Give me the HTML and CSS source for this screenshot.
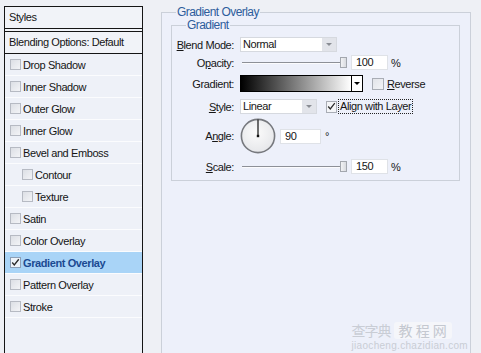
FILE: index.html
```html
<!DOCTYPE html>
<html lang="en">
<head>
<meta charset="utf-8">
<title>Layer Style - Gradient Overlay</title>
<link rel="stylesheet" href="styles.css">
</head>
<body>
<div class="dialog">
  <aside class="styles-panel">
    <div class="panel-head">Styles</div>
    <div class="panel-blend">Blending Options: Default</div>
    <ul class="fx-list">
      <li class="fx"><span class="cb"></span>Drop Shadow</li>
      <li class="fx"><span class="cb"></span>Inner Shadow</li>
      <li class="fx"><span class="cb"></span>Outer Glow</li>
      <li class="fx"><span class="cb"></span>Inner Glow</li>
      <li class="fx"><span class="cb"></span>Bevel and Emboss</li>
      <li class="fx sub"><span class="cb"></span>Contour</li>
      <li class="fx sub"><span class="cb"></span>Texture</li>
      <li class="fx"><span class="cb"></span>Satin</li>
      <li class="fx"><span class="cb"></span>Color Overlay</li>
      <li class="fx selected"><span class="cb checked"><svg viewBox="0 0 11 11" width="9" height="9"><path d="M1.5 5.5 L4 8.5 L9.5 1.5" fill="none" stroke="#2a2a2a" stroke-width="1.6"/></svg></span>Gradient Overlay</li>
      <li class="fx"><span class="cb"></span>Pattern Overlay</li>
      <li class="fx"><span class="cb"></span>Stroke</li>
    </ul>
  </aside>

  <main class="settings">
    <fieldset class="group outer">
      <legend>Gradient Overlay</legend>
      <fieldset class="group inner">
        <legend>Gradient</legend>

        <div class="row r-blend">
          <span class="lbl"><u>B</u>lend Mode:</span>
          <div class="select w-blend"><span class="sel-text">Normal</span><span class="sel-arrow"><i></i></span></div>
        </div>

        <div class="row r-opacity">
          <span class="lbl">O<u>p</u>acity:</span>
          <div class="slider"><span class="track"></span><span class="thumb"></span></div>
          <span class="num">100</span>
          <span class="unit">%</span>
        </div>

        <div class="row r-grad">
          <span class="lbl">Gradient:</span>
          <div class="gradient"><span class="ramp"></span><span class="ramp-arrow"><i></i></span></div>
          <span class="cb box12"></span>
          <span class="opt"><u>R</u>everse</span>
        </div>

        <div class="row r-style">
          <span class="lbl"><u>S</u>tyle:</span>
          <div class="select w-style"><span class="sel-text">Linear</span><span class="sel-arrow"><i></i></span></div>
          <span class="cb box12 checked"><svg viewBox="0 0 11 11" width="9" height="9"><path d="M1.5 5.5 L4 8.5 L9.5 1.5" fill="none" stroke="#2a2a2a" stroke-width="1.5"/></svg></span>
          <span class="focus">Align with Layer</span>
        </div>

        <div class="row r-angle">
          <span class="lbl">A<u>n</u>gle:</span>
          <svg class="dial" viewBox="0 0 36 36" width="36" height="36">
            <defs>
              <radialGradient id="dialfill" cx="0.45" cy="0.4" r="0.6">
                <stop offset="0" stop-color="#fbfbfb"/>
                <stop offset="1" stop-color="#e6e7ea"/>
              </radialGradient>
            </defs>
            <circle cx="18" cy="18" r="16.6" fill="url(#dialfill)" stroke="#77797e" stroke-width="1.6"/>
            <line x1="18" y1="18" x2="18" y2="1.5" stroke="#111" stroke-width="1.2"/>
            <rect x="16.8" y="16.8" width="2.4" height="2.4" fill="#111"/>
          </svg>
          <span class="num w-angle">90</span>
          <span class="unit deg">°</span>
        </div>

        <div class="row r-scale">
          <span class="lbl"><u>S</u>cale:</span>
          <div class="slider"><span class="track"></span><span class="thumb"></span></div>
          <span class="num">150</span>
          <span class="unit">%</span>
        </div>
      </fieldset>
    </fieldset>
  </main>

  <div class="watermark">
    <div class="wm-top"><span class="wm-a">查字典</span><span class="wm-b">教 程 网</span></div>
    <div class="wm-url">jiaocheng.chazidian.com</div>
  </div>
</div>
</body>
</html>
```

FILE: styles.css
```css
* { box-sizing: border-box; }

html, body {
  margin: 0;
  padding: 0;
}

body {
  width: 481px;
  height: 353px;
  overflow: hidden;
  background: #eef0f5;
  font-family: "Liberation Sans", Arial, sans-serif;
  font-size: 11px;
  letter-spacing: -0.4px;
  color: #151515;
}

u { text-decoration: underline; text-underline-offset: 1px; }

.dialog {
  position: relative;
  display: flex;
  height: 353px;
  overflow: hidden;
}

/* ---------- left styles list ---------- */
.styles-panel {
  flex: none;
  width: 139px;
  margin: 6px 0 0 4px;
  border: 1px solid #151515;
  border-bottom: none;
  background: #eef1f8;
}

.panel-head {
  height: 25px;
  padding-left: 4px;
  line-height: 21px;
  background: #f1f3f8;
  border-bottom: 4px double #151515;
}

.panel-blend {
  height: 22px;
  padding-left: 4px;
  line-height: 21px;
  background: #f1f3f8;
  border-bottom: 1px solid #151515;
}

.fx-list {
  list-style: none;
  margin: 0;
  padding: 0;
}

.fx {
  display: flex;
  align-items: center;
  height: 22px;
  padding-left: 5px;
  background: #eef1f8;
  border-bottom: 1px solid #fbfcfe;
}

.fx.sub { padding-left: 17px; }

.fx.selected {
  background: #a9d4f7;
  color: #1b4a92;
  font-weight: bold;
}

.cb {
  flex: none;
  display: flex;
  align-items: center;
  justify-content: center;
  width: 11px;
  height: 11px;
  margin-right: 2px;
  border: 1px solid #b6bac3;
  background: linear-gradient(135deg, #dcdfe5, #f3f4f7);
}

.fx.selected .cb {
  border-color: #8d9fb6;
  background: #eef3f9;
}

/* ---------- right settings ---------- */
.settings {
  flex: 1;
  min-width: 0;
  display: flex;
  flex-direction: column;
  padding: 5px 10px 0 18px;
}

.group {
  margin: 0;
  padding: 0;
  border: 1px solid #cbd0d9;
  min-inline-size: 0;
}

.group > legend {
  margin-left: 14px;
  padding: 0 1px;
  font-size: 12px;
  line-height: 14px;
  letter-spacing: -0.55px;
  color: #2d5d9c;
}

.outer {
  flex: 1;
  border-bottom: none;
  background: #edf0fa;
}

.inner {
  margin: -1px 10px 0 9px;
  padding: 0 0 6px 0;
}

.row {
  display: flex;
  align-items: center;
  height: 15px;
}

.r-blend   { margin-top: 5px; }
.r-opacity { margin-top: 3px; }
.r-grad    { margin-top: 5px; height: 17px; }
.r-style   { margin-top: 7px; }
.r-angle   { margin-top: 4px; height: 36px; }
.r-scale   { margin-top: 5px; }

.lbl {
  flex: none;
  width: 62px;
  margin-right: 6px;
  text-align: right;
  white-space: nowrap;
}

.select {
  display: flex;
  height: 15px;
  background: #fff;
  border: 1px solid #d6d9df;
}

.w-blend { width: 97px; }
.w-style { width: 77px; }

.sel-text {
  flex: 1;
  padding-left: 2px;
  line-height: 13px;
}

.sel-arrow {
  flex: none;
  display: flex;
  align-items: center;
  justify-content: center;
  width: 14px;
  background: #e2e4ea;
}

.sel-arrow i {
  display: block;
  width: 0;
  height: 0;
  border-left: 3px solid transparent;
  border-right: 3px solid transparent;
  border-top: 3px solid #8a8d94;
}

.slider {
  flex: none;
  display: flex;
  align-items: center;
  width: 105px;
  margin-left: 2px;
}

.track {
  flex: 1;
  height: 2px;
  border-top: 1px solid #8d9097;
  background: #fbfbfd;
}

.thumb {
  flex: none;
  width: 7px;
  height: 11px;
  margin-left: -2px;
  border: 1px solid #a3a7ae;
  background: linear-gradient(to right, #f2f3f5, #d9dbe0);
}

.num {
  flex: none;
  width: 37px;
  height: 15px;
  margin-left: 4px;
  padding-left: 4px;
  line-height: 13px;
  background: #fff;
  border: 1px solid #dfe2e7;
}

.w-angle { width: 41px; }

.unit { margin-left: 3px; }
.deg { margin-left: 4px; }

.gradient {
  flex: none;
  display: flex;
  width: 123px;
  height: 17px;
  border: 1px solid #000;
}

.ramp {
  flex: 1;
  background: linear-gradient(to right, #000 0%, #fff 100%);
}

.ramp-arrow {
  flex: none;
  display: flex;
  align-items: center;
  justify-content: center;
  width: 11px;
  background: #fff;
  border-left: 1px solid #000;
}

.ramp-arrow i {
  display: block;
  width: 0;
  height: 0;
  border-left: 3px solid transparent;
  border-right: 3px solid transparent;
  border-top: 3px solid #000;
}

.box12 {
  width: 12px;
  height: 12px;
  margin-left: 9px;
  margin-right: 0;
  border-color: #a9adb5;
  background: linear-gradient(135deg, #e2e4e9, #f3f4f7);
}

.r-style .box12 { width: 11px; background: #f4f5f8; }

.opt { margin-left: 3px; }

.focus {
  margin-left: 1px;
  height: 15px;
  padding: 0 1px;
  line-height: 13px;
  border: 1px dotted #222;
  white-space: nowrap;
}

.dial { flex: none; display: block; }

/* ---------- watermark overlay ---------- */
.watermark {
  position: absolute;
  right: 13px;
  bottom: 1px;
  color: #c9cdd5;
  letter-spacing: 0;
  text-align: center;
}

.wm-top {
  display: flex;
  align-items: center;
  height: 19px;
  font-family: "Noto Sans CJK SC", sans-serif;
  font-size: 14px;
  line-height: 19px;
}

.wm-a { letter-spacing: -1px; }

.wm-b {
  margin-left: 3px;
  padding: 0 5px;
  line-height: 17px;
  background: #f5f6fa;
  border-radius: 3px;
  color: #c4c8d0;
}

.wm-url {
  height: 12px;
  font-family: "Liberation Sans", Arial, sans-serif;
  font-size: 10px;
  line-height: 12px;
  letter-spacing: 0.3px;
}
```
